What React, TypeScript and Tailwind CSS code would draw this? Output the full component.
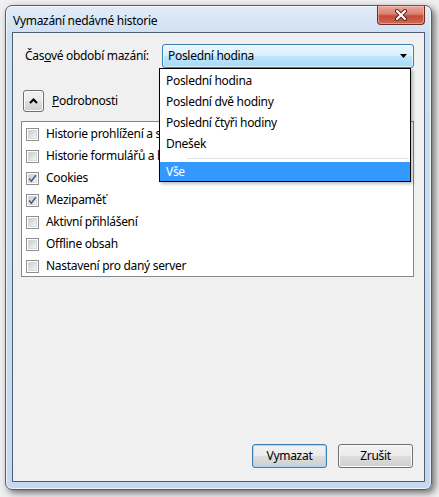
import React from "react";

type Item = { label: string; checked: boolean };

const items: Item[] = [
  { label: "Historie prohlížení a stahování", checked: false },
  { label: "Historie formulářů a hledání", checked: false },
  { label: "Cookies", checked: true },
  { label: "Mezipaměť", checked: true },
  { label: "Aktivní přihlášení", checked: false },
  { label: "Offline obsah", checked: false },
  { label: "Nastavení pro daný server", checked: false },
];

const options = ["Poslední hodina", "Poslední dvě hodiny", "Poslední čtyři hodiny", "Dnešek"];

function CheckBox({ checked }: { checked: boolean }) {
  return (
    <div className="w-[13px] h-[13px] border border-[#8e8f8f] bg-white p-[1px] shrink-0">
      <div className="relative w-full h-full bg-gradient-to-br from-[#c9ccd1] to-[#f6f6f6] border border-[#d9dadc]">
        {checked && (
          <svg className="absolute -left-[1px] -top-[1px]" width="9" height="9" viewBox="0 0 9 9">
            <path d="M1.2 4.6 L3.4 7.2 L7.8 1.2" fill="none" stroke="#4a5d8c" strokeWidth="1.6" />
          </svg>
        )}
      </div>
    </div>
  );
}

function WinButton({ label, primary }: { label: string; primary?: boolean }) {
  return (
    <div
      className={
        "w-[75px] h-[24px] rounded-[3px] border flex items-center justify-center text-black " +
        (primary
          ? "border-[#3c7fb1] shadow-[inset_0_0_0_1px_#a7d7f3]"
          : "border-[#707070] shadow-[inset_0_0_0_1px_#fbfbfb]")
      }
      style={{ background: "linear-gradient(#f2f2f2 0%, #ebebeb 50%, #dddddd 51%, #cfcfcf 100%)" }}
    >
      {label}
    </div>
  );
}

export default function App() {
  return (
    <div
      className="w-[439px] h-[497px] bg-[#efefef] pl-[5px] pt-[5px] text-[12px] leading-none tracking-[-0.3px]"
      style={{ fontFamily: '"Noto Sans", "Open Sans", sans-serif' }}
    >
      <div
        className="w-[427px] h-[485px] rounded-[7px] border border-[#525e6b] flex flex-col shadow-[3px_3px_7px_rgba(0,0,0,0.55),inset_0_0_0_1px_rgba(255,255,255,0.7)]"
        style={{ background: "linear-gradient(#e2ecf7 0px, #cddff2 30px, #c4d9f0 100%)" }}
      >
        {/* title bar */}
        <div className="h-[26px] flex items-start justify-between pl-[7px] shrink-0">
          <span className="mt-[9px] text-black">Vymazání nedávné historie</span>
          <div
            className="mr-[6px] w-[48px] h-[19px] rounded-b-[4px] border border-t-0 border-[#6e2b23] flex items-center justify-center shadow-[inset_0_0_0_1px_rgba(255,210,200,0.5)]"
            style={{ background: "linear-gradient(#e9a99b 0%, #d88070 45%, #c44a36 55%, #cf6a55 100%)" }}
          >
            <svg width="14" height="12" viewBox="0 0 14 12">
              <path d="M3 2 L11 10 M11 2 L3 10" stroke="#5a1f18" strokeWidth="4" strokeLinecap="round" />
              <path d="M3 2 L11 10 M11 2 L3 10" stroke="#ffffff" strokeWidth="2.2" strokeLinecap="round" />
            </svg>
          </div>
        </div>

        {/* client area */}
        <div className="relative mx-[6px] mb-[7px] flex-1 border border-[#4f6073] bg-[#f0f0f0] flex flex-col">
          <div className="flex items-center h-[24px] mt-[11px] pl-[12px] pr-[10px]">
            <span className="text-black">
              Čas<span className="underline">o</span>vé období mazání:
            </span>
            <div
              className="ml-auto w-[252px] h-[24px] rounded-[3px] border border-[#3c7fb1] flex items-center justify-between pl-[5px] pr-[6px] shadow-[inset_0_0_0_1px_rgba(255,255,255,0.6)]"
              style={{ background: "linear-gradient(#eaf6fd 0%, #d9f0fc 50%, #bee6fd 51%, #a7d9f5 100%)" }}
            >
              <span className="text-black">Poslední hodina</span>
              <svg width="7" height="4" viewBox="0 0 7 4">
                <path d="M0 0 H7 L3.5 4 Z" fill="#000" />
              </svg>
            </div>
          </div>

          <div className="flex items-center h-[22px] mt-[22px] pl-[10px]">
            <div
              className="w-[21px] h-[22px] rounded-[3px] border border-[#707070] flex items-center justify-center shadow-[inset_0_0_0_1px_#fbfbfb]"
              style={{ background: "linear-gradient(#f2f2f2 0%, #ebebeb 50%, #dddddd 51%, #cfcfcf 100%)" }}
            >
              <svg width="9" height="6" viewBox="0 0 9 6">
                <path d="M1 5 L4.5 1.5 L8 5" fill="none" stroke="#000" strokeWidth="2" />
              </svg>
            </div>
            <span className="ml-[8px] text-black">
              <span className="underline">P</span>odrobnosti
            </span>
          </div>

          <div className="mt-[9px] ml-[8px] mr-[10px] h-[156px] border border-[#828790] bg-white pt-[1px]">
            {items.map((it) => (
              <div key={it.label} className="h-[22px] flex items-center pl-[4px]">
                <CheckBox checked={it.checked} />
                <span className="ml-[7px] text-black whitespace-nowrap">{it.label}</span>
              </div>
            ))}
          </div>

          <div className="flex-1" />

          <div className="flex justify-end gap-[11px] pr-[11px] pb-[13px]">
            <WinButton label="Vymazat" primary />
            <WinButton label="Zrušit" />
          </div>

          {/* open dropdown list */}
          <div className="absolute left-[146px] top-[35px] w-[252px] h-[114px] border border-[#000] bg-white pt-[1px] shadow-[2px_2px_3px_rgba(0,0,0,0.25)]">
            {options.map((o) => (
              <div key={o} className="h-[21px] flex items-center pl-[6px] text-black">
                {o}
              </div>
            ))}
            <div className="h-[8px] flex items-center pl-[27px] pr-[1px]">
              <div className="w-full h-[1px] bg-[#dfe3e8]" />
            </div>
            <div className="h-[19px] flex items-center pl-[6px] bg-[#3399ff] text-white">Vše</div>
          </div>
        </div>
      </div>
    </div>
  );
}
